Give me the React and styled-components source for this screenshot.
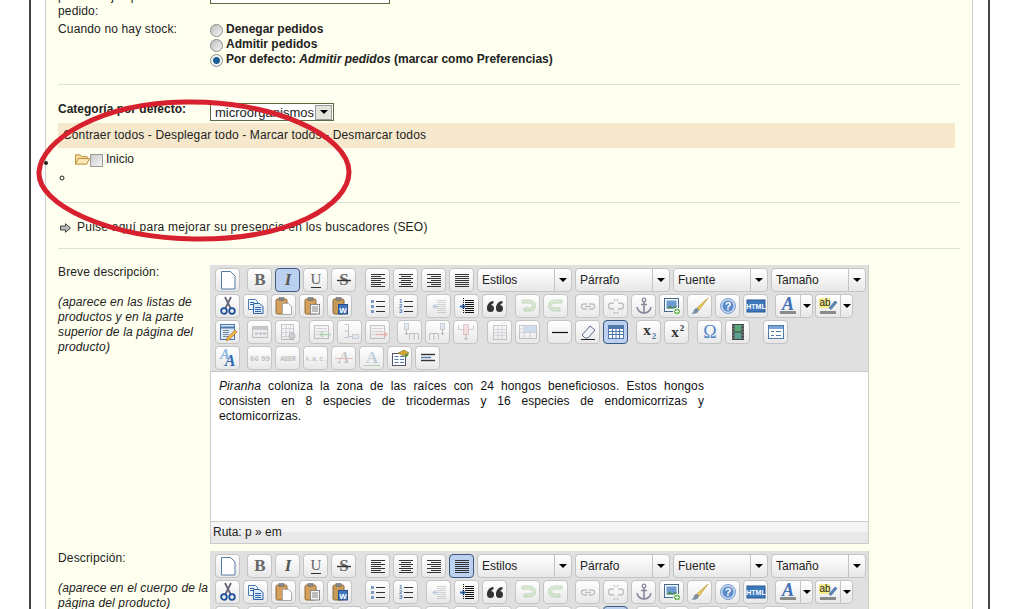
import React from 'react'
import styled, { createGlobalStyle } from 'styled-components'

const Global = createGlobalStyle`
  html, body { margin: 0; padding: 0; background: #fff; overflow: hidden; }
  body { font-family: "Liberation Sans", Arial, sans-serif; font-size: 12px; line-height: 15px; color: #222; }
`

const Svg = styled.svg`
  width: 20px;
  height: 20px;
  display: block;
`

const Serif = ({ x = 10, y = 15, s = 15, c = '#666', i, w = 700, children }) => (
  <text x={x} y={y} fontSize={s} fontFamily="Liberation Serif" fontWeight={w} fontStyle={i ? 'italic' : 'normal'} textAnchor="middle" fill={c}>{children}</text>
)

const lines = (x1, x2, ys, c = '#333', key = 'l') => ys.map((y, n) => (
  <path key={key + n} d={`M${x1} ${y + 0.5}H${Array.isArray(x2) ? x2[n % x2.length] : x2}`} stroke={c} />
))

const Clip = ({ x = 2, y = 3, fill = '#d59f5c' }) => (
  <g>
    <rect x={x} y={y} width="11" height="15" rx="1.5" fill={fill} stroke="#8a6a38" />
    <rect x={x + 3} y={y - 1.5} width="5" height="3" fill="#888" stroke="#666" strokeWidth=".5" />
  </g>
)

const icons = {
  doc: <path d="M3.500 1.500h9l4.500 4.500v13h-13.500z" fill="#fff" stroke="#577b9e" strokeLinejoin="round" />,
  bold: <Serif s={17}>B</Serif>,
  italic: <Serif s={17} i c="#555">I</Serif>,
  under: (<><Serif s={15} w={400} y={14}>U</Serif><path d="M5 17.500h10" stroke="#333" /></>),
  strike: (<><Serif s={17} y={15}>S</Serif><path d="M3 10.500h14" stroke="#333" strokeWidth="1.400" /></>),
  left: lines(3, [17, 13], [4, 6, 8, 10, 12, 14, 16]),
  center: lines(3, 17, [4, 8, 12, 16]).concat(lines(5, 15, [6, 10, 14], '#333', 'c')),
  right: lines(3, 17, [4, 8, 12, 16]).concat(lines(7, 17, [6, 10, 14], '#333', 'r')),
  justify: lines(3, 17, [4, 6, 8, 10, 12, 14, 16]),
  cut: (<>
    <path d="M7 1l5.500 11M13 1L7.500 12" stroke="#667" strokeWidth="1.800" />
    <circle cx="6" cy="15" r="2.800" fill="none" stroke="#1c4e9a" strokeWidth="1.800" />
    <circle cx="14" cy="15" r="2.800" fill="none" stroke="#1c4e9a" strokeWidth="1.800" />
  </>),
  copy: (<>
    <path d="M2.500 3.500h7l2 2v8h-9z" fill="#eef4fb" stroke="#4c7cb4" />
    <path d="M7.500 7.500h6l3.500 3v7h-9.500z" fill="#dce9f7" stroke="#2f64a8" />
    <path d="M4 6.500h4M4 8.500h3M9 11.500h6M9 13.500h6M9 15.500h6" stroke="#2f64a8" />
  </>),
  paste: (<><Clip /><path d="M8.500 7.500h6l3 3v8h-9z" fill="#fff" stroke="#aaa" /></>),
  pasteText: (<><Clip x={3} /><rect x="8.500" y="8.500" width="9" height="9.500" fill="#f4f4f4" stroke="#888" /><path d="M10 11h6M10 13h6M10 15h6" stroke="#888" /></>),
  pasteWord: (<><Clip x={3} fill="#c89a58" /><rect x="8.500" y="8.500" width="9" height="9.500" fill="#3f76c0" stroke="#2a4f88" /><text x="13" y="16.500" fontSize="8" fontWeight="700" fill="#fff" textAnchor="middle" fontFamily="Liberation Sans">W</text></>),
  bullets: (<>
    {[4, 9, 14].map(y => <rect key={y} x="3" y={y} width="3" height="3" fill="#7c9cc4" />)}
    {lines(8, 17, [5, 10, 15])}
  </>),
  numbers: (<>
    {[1, 2, 3].map((n, k) => <text key={n} x="3" y={7 + k * 5} fontSize="6" fontWeight="700" fill="#4f78ac" fontFamily="Liberation Sans">{n}</text>)}
    {lines(8, 17, [5, 10, 15])}
  </>),
  outdent: (<>
    {lines(8, 17, [4, 6, 8, 10, 12, 14, 16], '#888')}
    <path d="M3 10.500l3.500-3v2H9v2H6.500v2z" fill="#5a86c0" />
  </>),
  indent: (<>
    {lines(8, 17, [4, 6, 8, 10, 12, 14, 16], '#111')}
    <path d="M9 10.500l-3.500-3v2H3v2h2.500v2z" fill="#2d66b8" />
    <path d="M6.500 2v16" stroke="#111" strokeDasharray="1 1" />
  </>),
  quote: (<>
    <path d="M2 12.500C2 8.500 4 5.500 8.500 5v2.200C6.800 7.700 5.800 8.800 5.700 10z" fill="#333" />
    <circle cx="5.500" cy="12.500" r="3.500" fill="#333" />
    <path d="M11 12.500C11 8.500 13 5.500 17.500 5v2.200c-1.700.5-2.700 1.600-2.800 2.800z" fill="#333" />
    <circle cx="14.500" cy="12.500" r="3.500" fill="#333" />
  </>),
  undo: <path d="M4 4h8a4.500 4.500 0 0 1 0 11H6v-3h6a1.500 1.500 0 0 0 0-5H4z" fill="#9fd08a" stroke="#5f9a50" />,
  redo: <path d="M16 4H8a4.500 4.500 0 0 0 0 11h6v-3H8a1.500 1.500 0 0 1 0-5h8z" fill="#9fd08a" stroke="#5f9a50" />,
  link: <path d="M9 8H6a2.500 2.500 0 0 0 0 5h3M11 8h3a2.500 2.500 0 0 1 0 5h-3M7 10.500h6" stroke="#555" fill="none" strokeWidth="1.400" />,
  unlink: <path d="M8 7H5.500a3 3 0 0 0 0 6H8M12 7h2.500a3 3 0 0 1 0 6H12M8 3l1 2M12 3l-1 2M8 18l1-2M12 18l-1-2" stroke="#555" fill="none" strokeWidth="1.400" />,
  anchor: (<>
    <circle cx="10" cy="4" r="1.800" fill="none" stroke="#889" strokeWidth="1.300" />
    <path d="M10 6v11M7 8.500h6M3 11c.5 4 4 6 7 6s6.500-2 7-6" fill="none" stroke="#889" strokeWidth="1.600" />
  </>),
  image: (<>
    <rect x="2.500" y="2.500" width="14" height="13" fill="#f4f8fc" stroke="#46688c" />
    <rect x="4.500" y="4.500" width="10" height="8" fill="#6b9bd0" />
    <path d="M4.500 12.500l3-3 3 2 4-2v3z" fill="#4d8a5a" />
    <circle cx="15" cy="15.500" r="3.500" fill="#5cb04a" stroke="#fff" />
    <path d="M13 15.500h4M15 13.500v4" stroke="#fff" />
  </>),
  brush: (<>
    <path d="M18 2L7 12l2 2z" fill="#f1cd64" stroke="#c8a642" />
    <path d="M7 12c-2 0-3 1.500-3.500 3.500-.3 1-1 1.500-2 2 3 .8 6.500.3 7.500-3.500z" fill="#7b8ea2" />
  </>),
  help: (<>
    <circle cx="10" cy="10" r="7.500" fill="#c8daf2" stroke="#7a9ccc" />
    <circle cx="10" cy="10" r="5.500" fill="#5a8ac8" />
    <text x="10" y="14" fontSize="11" fontWeight="700" fill="#fff" textAnchor="middle" fontFamily="Liberation Sans">?</text>
  </>),
  html: (<>
    <rect x="1" y="4" width="18" height="12" fill="#3c78bc" stroke="#29588f" />
    <text x="10" y="13" fontSize="7" fontWeight="700" fill="#fff" textAnchor="middle" fontFamily="Liberation Sans">HTML</text>
  </>),
  fore: (<>
    <Serif s={18} y={14} i c="#3f6fb4">A</Serif>
    <rect x="2" y="15" width="16" height="3" fill="#8a8a8a" />
  </>),
  hilite: (<>
    <rect x="1" y="2" width="11" height="10" fill="#f3ee8a" />
    <text x="1.500" y="10" fontSize="10" fill="#222" fontFamily="Liberation Sans">ab</text>
    <path d="M11 12l6-7 2 1.500-6 7z" fill="#5d86b8" stroke="#3d5f88" strokeWidth=".6" />
    <rect x="2" y="15" width="16" height="3" fill="#8a8a8a" />
  </>),
  template: (<>
    <rect x="2.500" y="2.500" width="14" height="15" fill="#dbe8f6" stroke="#4f78ac" />
    <path d="M3 5.500h13" stroke="#4f78ac" strokeWidth="2" />
    {lines(5, 11, [8, 10, 12, 14], '#7a8a9a')}
    <path d="M9 16l8-8 2 2-8 8-3 .5z" fill="#f0b44a" stroke="#b5762a" strokeWidth=".7" />
  </>),
  tableCells: (<>
    <rect x="2.500" y="4.500" width="15" height="11" fill="#dfe6f0" stroke="#555" />
    <rect x="3" y="5" width="14" height="3" fill="#667" />
    <path d="M5 11.500h3M9 11.500h3M13 11.500h3" stroke="#555" strokeWidth="2" />
  </>),
  tableProps: (<>
    <rect x="3.500" y="2.500" width="12" height="15" fill="#eef2f8" stroke="#556" />
    <path d="M4 6.500h11M4 10.500h11M4 14.500h11M8 3v14M12 3v14" stroke="#889" />
    <circle cx="14" cy="14" r="3" fill="#889" stroke="#444" />
  </>),
  rowBefore: (<>
    <rect x="2.500" y="3.500" width="14" height="13" fill="#e6f0e6" stroke="#556" />
    {lines(4, 15, [6, 9, 12], '#889')}
    <path d="M8 12.500h11M8 12.500l3-2.500M8 12.500l3 2.500" stroke="#3a9a3a" strokeWidth="1.500" fill="none" />
  </>),
  rowAfter: (<>
    <path d="M4.500 2.500h4M8.500 2.500v13h-4M4.500 9h4" stroke="#556" fill="none" />
    <rect x="12.500" y="12.500" width="6" height="4" fill="#c8d8e8" stroke="#789" />
    <path d="M8 14.500h4" stroke="#4f78ac" />
  </>),
  rowDelete: (<>
    <rect x="2.500" y="3.500" width="14" height="13" fill="#f6e8e8" stroke="#556" />
    {lines(4, 15, [6, 9, 12], '#889')}
    <path d="M8 12.500h11M19 12.500l-3-2.500M19 12.500l-3 2.500" stroke="#c83a3a" strokeWidth="1.500" fill="none" />
  </>),
  colBefore: (<>
    <rect x="4.500" y="1.500" width="4" height="6" fill="#b8cce0" stroke="#678" />
    <path d="M6.500 8v5M5 11l1.500 2L8 11" stroke="#444" fill="none" />
    <path d="M9.500 17.500v-6h9v6M14 11.500v6" stroke="#556" fill="none" />
  </>),
  colAfter: (<>
    <rect x="12.500" y="1.500" width="4" height="6" fill="#b8cce0" stroke="#678" />
    <path d="M14.500 8v5M13 11l1.500 2 1.500-2" stroke="#444" fill="none" />
    <path d="M1.500 17.500v-6h9v6M6 11.500v6" stroke="#556" fill="none" />
  </>),
  colDelete: (<>
    <path d="M2.500 8V3.500M17.500 8V3.500" stroke="#778" />
    <rect x="7.500" y="2.500" width="5" height="10" fill="#f0a8b0" stroke="#a66" />
    <path d="M10 12v6M8.500 16l1.500 2 1.500-2" stroke="#444" fill="none" />
    <path d="M2.500 7.500h5M12.500 7.500h5" stroke="#778" />
  </>),
  tableSplit: (<>
    <rect x="3.500" y="3.500" width="13" height="14" fill="#eef2f8" stroke="#667" />
    <path d="M4 7.500h12M4 10.500h12M4 13.500h12M8 4v13M12 4v13" stroke="#99a" />
    <path d="M10 1h7" stroke="#778" strokeDasharray="1 1" />
  </>),
  tableMerge: (<>
    <rect x="1.500" y="3.500" width="17" height="13" fill="#eef2f8" stroke="#667" />
    <rect x="6" y="4" width="12" height="6" fill="#7da6d8" />
    <path d="M2 7h4M2 10.500h16M6 4v12M12 10v6" stroke="#889" />
  </>),
  hr: <path d="M2 10.500h16" stroke="#111" strokeWidth="1.200" />,
  eraser: (<>
    <path d="M4 13l8-9 5 4-7 8H7z" fill="#f4f4f8" stroke="#5a6a88" strokeLinejoin="round" />
    <path d="M3 17.500h14" stroke="#222" />
  </>),
  table: (<>
    <rect x="2.500" y="3.500" width="15" height="13" fill="#fff" stroke="#4f78ac" />
    <rect x="3" y="4" width="14" height="3" fill="#4f78ac" />
    <path d="M3 9.500h14M3 12.500h14M6.500 7v9M10 7v9M13.500 7v9" stroke="#4f78ac" />
  </>),
  sub: (<><Serif x={8} y={13} s={15} c="#333">x</Serif><Serif x={15} y={17} s={9} c="#4f78ac">2</Serif></>),
  sup: (<><Serif x={8} y={15} s={15} c="#333">x</Serif><Serif x={15} y={9} s={9} c="#333">2</Serif></>),
  omega: <Serif s={18} y={16} w={400} c="#4f86c8">Ω</Serif>,
  film: (<>
    <rect x="4" y="2" width="12" height="16" fill="#444" />
    <rect x="6.500" y="3" width="7" height="6.500" fill="#5aa878" />
    <rect x="6.500" y="10.500" width="7" height="6.500" fill="#5aa090" />
    {[4, 7, 10, 13, 16].map(y => <path key={y} d={`M4.500 ${y}h1M14.500 ${y}h1`} stroke="#ddd" />)}
  </>),
  form: (<>
    <rect x="2.500" y="3.500" width="15" height="13" fill="#fff" stroke="#4f78ac" />
    <path d="M3 5.500h14" stroke="#7da6d8" strokeWidth="3" />
    <path d="M5 9.500h3M5 13.500h3M10 9.500h5M10 13.500h5" stroke="#4f78ac" />
  </>),
  styleProps: (<>
    <text x="7" y="11" fontSize="14" fontWeight="700" fontStyle="italic" fill="#8ab4e0" textAnchor="middle" fontFamily="Liberation Serif">A</text>
    <text x="12" y="18" fontSize="16" fontWeight="700" fontStyle="italic" fill="#2c6ab4" textAnchor="middle" fontFamily="Liberation Serif">A</text>
  </>),
  cite: <text x="10" y="13" fontSize="8" fontWeight="700" fill="#555" textAnchor="middle" fontFamily="Liberation Sans">66 99</text>,
  abbr: <text x="10" y="13" fontSize="6.500" fontWeight="700" fill="#555" textAnchor="middle" fontFamily="Liberation Mono">ABBR</text>,
  acronym: <text x="10" y="13" fontSize="6" fontWeight="700" fill="#555" textAnchor="middle" fontFamily="Liberation Mono">A.B.C.</text>,
  del: (<><Serif s={17} y={15} i c="#666">A</Serif><path d="M1 10.500h18" stroke="#c83a3a" /></>),
  ins: (<><Serif s={17} y={15} c="#5a7fa8">A</Serif><path d="M2 17.500h16" stroke="#3aa03a" /></>),
  attrs: (<>
    <rect x="2.500" y="5.500" width="13" height="12" fill="#fff" stroke="#556" />
    <path d="M4.500 8.500h4M4.500 11.500h4M4.500 14.500h4M10 8.500h4M10 11.500h4M10 14.500h4" stroke="#4f78ac" />
    <path d="M8 5l6-3 5 3-5 3z" fill="#d0a63c" stroke="#88701e" strokeWidth=".6" />
    <path d="M15 9l3-3" stroke="#4a8a4a" strokeWidth="2" />
  </>),
  visual: (<>
    <path d="M3 6.500h14" stroke="#333" strokeWidth="1.400" />
    <path d="M3 9.500h10" stroke="#4f78ac" strokeWidth="1.400" />
    <path d="M3 12.500h14" stroke="#333" strokeWidth="1.400" />
  </>),
}

// icon, margin before, disabled, active
const toolRows = [
  [['cut'], ['copy'], ['paste'], ['pasteText'], ['pasteWord'],
    ['bullets', 10], ['numbers'], ['outdent', 5, 1], ['indent'], ['quote'],
    ['undo', 5, 1], ['redo', 0, 1], ['link', 4, 1], ['unlink', 0, 1], ['anchor'], ['image'], ['brush'], ['help'], ['html']],
  [['template'], ['tableCells', 4, 1], ['tableProps', 0, 1], ['rowBefore', 6, 1], ['rowAfter', 0, 1], ['rowDelete', 0, 1],
    ['colBefore', 4, 1], ['colAfter', 0, 1], ['colDelete', 0, 1], ['tableSplit', 6, 1], ['tableMerge', 0, 1],
    ['hr', 4], ['eraser'], ['table', 0, 0, 1], ['sub', 5], ['sup'], ['omega', 5], ['film'], ['form', 10]],
  [['styleProps'], ['cite', 4, 1], ['abbr', 0, 1], ['acronym', 0, 1], ['del', 0, 1], ['ins', 0, 1], ['attrs'], ['visual']],
]

const Page = styled.div`
  height: 609px;
  overflow: hidden;
  position: relative;
`
const Frame = styled.div`
  box-sizing: border-box;
  width: 961px;
  min-height: 800px;
  margin-left: 29px;
  padding-left: 14px;
  border-left: 2px solid #444;
  border-right: 2px solid #444;
`
const Panel = styled.div`
  box-sizing: border-box;
  width: 928px;
  min-height: 800px;
  margin-top: -11px;
  padding: 0 12px;
  background: #ffffef;
  border-left: 1px solid #ccc;
  border-right: 1px solid #ccc;
`
const Field = styled.div`
  display: grid;
  grid-template-columns: 152px 1fr;
  margin-top: ${p => p.$top || 0}px;
`
const Label = styled.div`
  font-weight: ${p => (p.$bold ? 700 : 400)};
  letter-spacing: ${p => (p.$bold ? 0 : 0.15)}px;
  ${p => p.$justify && 'width: 146px; text-align: justify;'}
`
const Hint = styled.div`
  margin-top: 15px;
  font-style: italic;
`
const TextBox = styled.div`
  box-sizing: border-box;
  width: 180px;
  height: 15px;
  border: 1px solid #5c6b42;
  background: #fff;
`
const RadioRow = styled.label`
  display: flex;
  align-items: center;
  height: 15px;
  font-weight: 700;
  em { font-style: italic; }
`
const Radio = styled.input.attrs({ type: 'radio', readOnly: true })`
  appearance: none;
  box-sizing: border-box;
  width: 13px;
  height: 13px;
  margin: 2px 3px 0 0;
  border-radius: 50%;
  border: 1px solid #8a8a8a;
  background: ${p => p.checked
    ? 'radial-gradient(circle, #1c5f96 0 3px, #f4f4f4 4px)'
    : 'linear-gradient(135deg, #bdbdbd, #f6f6f6)'};
`
const Rule = styled.div`
  height: 1px;
  background: #dedfd5;
  margin-top: ${p => p.$top}px;
`
const Combo = styled.div`
  box-sizing: border-box;
  display: flex;
  align-items: center;
  justify-content: space-between;
  width: 124px;
  height: 18px;
  margin-top: 1px;
  padding: 0 1px 0 4px;
  border: 1px solid #5c6b42;
  background: #fff;
  font-size: 13px;
`
const ComboArrow = styled.span`
  box-sizing: border-box;
  width: 17px;
  height: 15px;
  display: flex;
  align-items: center;
  justify-content: center;
  background: #e4e4dc;
  border: 1px solid #999;
`
const Triangle = styled.span`
  width: 0;
  height: 0;
  border-left: 4px solid transparent;
  border-right: 4px solid transparent;
  border-top: 4px solid #000;
`
const ActionsBar = styled.div`
  height: 25px;
  margin: 2px 5px 0 0;
  padding-left: 5px;
  background: #f6e8cc;
  line-height: 25px;
  letter-spacing: 0.14px;
`
const Tree = styled.ul`
  margin: 3px 0 0;
  padding: 0;
  list-style: disc;
  ul {
    margin: 3px 0 0;
    padding: 0 0 0 16px;
    list-style: circle;
  }
  li { min-height: 15px; }
`
const TreeNode = styled.div`
  display: flex;
  align-items: center;
  height: 16px;
  padding-left: 17px;
`
const Check = styled.span`
  box-sizing: border-box;
  width: 13px;
  height: 13px;
  margin: 2px 3px 0 0;
  border: 1px solid #999;
  background: linear-gradient(135deg, #ccc, #f4f4f4);
`
const SeoRow = styled.div`
  display: flex;
  align-items: center;
  gap: 6px;
  height: 15px;
  margin: 17px 0 0 2px;
  letter-spacing: 0.23px;
`
const Editor = styled.div`
  box-sizing: border-box;
  width: 659px;
  border: 1px solid #ccc;
  border-width: 0 1px 1px 0;
`
const Toolbar = styled.div`
  display: flex;
  flex-direction: column;
  gap: 2px;
  height: 107px;
  box-sizing: border-box;
  padding: 3px 0 0 5px;
  background: #e0e0e0;
  border-bottom: 1px solid #c8c8c8;
`
const ToolRow = styled.div`
  display: flex;
  gap: 3px;
  height: 24px;
`
const ToolButton = styled.div`
  box-sizing: border-box;
  flex: none;
  width: ${p => p.$w || 25}px;
  height: 24px;
  margin-left: ${p => p.$ml || 0}px;
  display: flex;
  align-items: center;
  justify-content: center;
  border: 1px solid ${p => (p.$on ? '#3c5a80' : '#c4c4c4')};
  border-radius: 4px;
  background: ${p => (p.$on ? '#bcd0f0' : 'linear-gradient(#fff, #e8e8e8)')};
  svg { opacity: ${p => (p.$off ? 0.32 : 1)}; }
`
const Split = styled.div`
  display: flex;
  flex: none;
  margin-left: ${p => p.$ml || 0}px;
  ${ToolButton}:first-child { border-radius: 4px 0 0 4px; border-right: 0; }
  ${ToolButton}:last-child { border-radius: 0 4px 4px 0; }
`
const Dropdown = styled.div`
  box-sizing: border-box;
  flex: none;
  display: flex;
  width: 95px;
  height: 24px;
  border: 1px solid #c4c4c4;
  border-radius: 4px;
  background: linear-gradient(#fff, #e8e8e8);
`
const DropdownLabel = styled.span`
  flex: 1;
  padding-left: 4px;
  line-height: 22px;
`
const DropdownArrow = styled.span`
  width: 16px;
  display: flex;
  align-items: center;
  justify-content: center;
  border-left: 1px solid #c4c4c4;
`
const Content = styled.div`
  box-sizing: border-box;
  height: 149px;
  padding: 7px 0 0 8px;
  background: #fff;
  border-left: 1px solid #ccc;
  color: #111;
  p {
    margin: 0;
    width: 485px;
    text-align: justify;
    letter-spacing: 0.1px;
  }
`
const StatusBar = styled.div`
  box-sizing: border-box;
  height: 22px;
  padding-left: 2px;
  line-height: 20px;
  border: 1px solid #ccc;
  border-width: 1px 0 0 1px;
  background: linear-gradient(#f4f4f4 50%, #e8e8e8 50%);
`
const Annotation = styled.svg`
  position: absolute;
  left: 0;
  top: 0;
  width: 1021px;
  height: 609px;
  pointer-events: none;
`

const Tool = ({ name, ml, off, on }) => (
  <ToolButton $ml={ml} $off={off} $on={on}>
    <Svg viewBox="0 0 20 20">{icons[name]}</Svg>
  </ToolButton>
)

const ColorTool = ({ name, ml }) => (
  <Split $ml={ml}>
    <ToolButton><Svg viewBox="0 0 20 20">{icons[name]}</Svg></ToolButton>
    <ToolButton $w={13}><Triangle /></ToolButton>
  </Split>
)

const RichEditor = ({ active, children }) => (
  <Editor>
    <Toolbar>
      <ToolRow>
        <Tool name="doc" />
        <Tool name="bold" ml={4} />
        <Tool name="italic" on={active === 'italic'} />
        <Tool name="under" />
        <Tool name="strike" />
        <Tool name="left" ml={6} />
        <Tool name="center" />
        <Tool name="right" />
        <Tool name="justify" on={active === 'justify'} />
        {['Estilos', 'Párrafo', 'Fuente', 'Tamaño'].map(t => (
          <Dropdown key={t}>
            <DropdownLabel>{t}</DropdownLabel>
            <DropdownArrow><Triangle /></DropdownArrow>
          </Dropdown>
        ))}
      </ToolRow>
      {toolRows.map((row, r) => (
        <ToolRow key={r}>
          {row.map(([name, ml, off, on]) => (
            <Tool key={name} name={name} ml={ml} off={off} on={on} />
          ))}
          {r === 0 && <ColorTool name="fore" ml={4} />}
          {r === 0 && <ColorTool name="hilite" ml={-1} />}
        </ToolRow>
      ))}
    </Toolbar>
    {children}
  </Editor>
)

export default function App() {
  return (
    <Page>
      <Global />
      <Frame>
        <Panel>
          <Field>
            <Label $justify>puede dejar pendiente un pedido:</Label>
            <div><TextBox /></div>
          </Field>
          <Field $top={3}>
            <Label>Cuando no hay stock:</Label>
            <div>
              <RadioRow><Radio /><span>Denegar pedidos</span></RadioRow>
              <RadioRow><Radio /><span>Admitir pedidos</span></RadioRow>
              <RadioRow><Radio checked /><span>Por defecto: <em>Admitir pedidos</em> (marcar como Preferencias)</span></RadioRow>
            </div>
          </Field>
          <Rule $top={17} />
          <Field $top={17}>
            <Label $bold>Categoría por defecto:</Label>
            <Combo>
              microorganismos
              <ComboArrow><Triangle /></ComboArrow>
            </Combo>
          </Field>
          <ActionsBar>Contraer todos - Desplegar todo - Marcar todos - Desmarcar todos</ActionsBar>
          <Tree>
            <li>
              <TreeNode>
                <svg width="15" height="14" viewBox="0 0 16 14">
                  <path d="M.5 12.500V2.500h5l1.500 2h6v2" fill="#f8dc9c" stroke="#b98a38" />
                  <path d="M.5 12.500l3-6h12l-3 6z" fill="#fbe6b4" stroke="#b98a38" />
                </svg>
                <Check />
                Inicio
              </TreeNode>
              <ul><li /></ul>
            </li>
          </Tree>
          <Rule $top={17} />
          <SeoRow>
            <svg width="11" height="10" viewBox="0 0 11 10">
              <path d="M.5 3h5V.7L10.500 5l-5 4.300V7h-5z" fill="#bbb" stroke="#444" />
            </svg>
            Pulse aquí para mejorar su presencia en los buscadores (SEO)
          </SeoRow>
          <Rule $top={13} />
          <Field $top={16}>
            <Label>
              Breve descripción:
              <Hint>(aparece en las listas de productos y en la parte superior de la página del producto)</Hint>
            </Label>
            <RichEditor active="italic">
              <Content>
                <p><em>Piranha</em> coloniza la zona de las raíces con 24 hongos beneficiosos. Estos hongos consisten en 8 especies de tricodermas y 16 especies de endomicorrizas y ectomicorrizas.</p>
              </Content>
              <StatusBar>Ruta: p » em</StatusBar>
            </RichEditor>
          </Field>
          <Field $top={7}>
            <Label>
              Descripción:
              <Hint>(aparece en el cuerpo de la página del producto)</Hint>
            </Label>
            <RichEditor active="justify" />
          </Field>
        </Panel>
      </Frame>
      <Annotation viewBox="0 0 1021 609">
        <path d="M39 172C41 140 100 103 185 102C270 100 349 135 349 172C349 205 290 240 195 239C110 238 37 205 39 172Z" fill="none" stroke="#d8212e" strokeWidth="5" />
      </Annotation>
    </Page>
  )
}
